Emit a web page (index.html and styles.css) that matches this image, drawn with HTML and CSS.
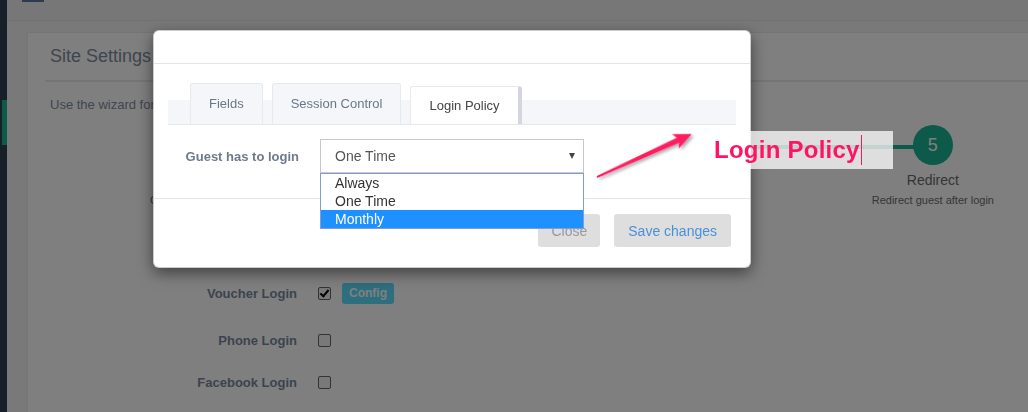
FILE: index.html
```html
<!DOCTYPE html>
<html lang="en">
<head>
<meta charset="utf-8">
<title>Site Settings</title>
<link rel="stylesheet" href="styles.css">
</head>
<body>
<div class="app">
  <aside class="sidebar"><div class="sidebar-accent"></div></aside>
  <div class="main">
    <header class="topbar"><span class="topbar-tab"></span></header>
    <div class="content">
      <section class="panel">
        <div class="panel-heading"><h2>Site Settings</h2></div>
        <div class="panel-body">
          <p class="intro">Use the wizard for setup.</p>
          <ol class="wizard">
            <li class="step step-first"><span class="step-num">1</span><span class="step-title">Fields</span><span class="step-desc">Collect fields</span></li>
            <li class="step"><span class="step-num">2</span><span class="step-title">Session</span><span class="step-desc">Time limits</span></li>
            <li class="step"><span class="step-num">3</span><span class="step-title">Policy</span><span class="step-desc">Login policy</span></li>
            <li class="step"><span class="step-num">4</span><span class="step-title">Pages</span><span class="step-desc">Portal page</span></li>
            <li class="step step-last"><span class="step-num">5</span><span class="step-title">Redirect</span><span class="step-desc">Redirect guest after login</span></li>
          </ol>
          <div class="login-options">
            <div class="opt-row opt-row-wide">
              <span class="opt-label">Voucher Login</span>
              <input class="opt-check" type="checkbox" checked>
              <button class="btn-config" type="button">Config</button>
            </div>
            <div class="opt-row">
              <span class="opt-label">Phone Login</span>
              <input class="opt-check" type="checkbox">
            </div>
            <div class="opt-row">
              <span class="opt-label">Facebook Login</span>
              <input class="opt-check" type="checkbox">
            </div>
          </div>
        </div>
      </section>
    </div>
  </div>
</div>

<div class="backdrop"></div>

<div class="modal">
  <div class="modal-header"></div>
  <div class="modal-body">
    <ul class="nav-tabs">
      <li class="tab">Fields</li>
      <li class="tab">Session Control</li>
      <li class="tab tab-active">Login Policy</li>
    </ul>
    <div class="form-group">
      <label class="form-label">Guest has to login</label>
      <div class="select">
        <span class="select-value">One Time</span>
        <span class="select-caret"></span>
        <ul class="select-list">
          <li class="option">Always</li>
          <li class="option">One Time</li>
          <li class="option option-hover">Monthly</li>
        </ul>
      </div>
    </div>
  </div>
  <div class="modal-footer">
    <button class="btn btn-close" type="button">Close</button>
    <button class="btn btn-save" type="button">Save changes</button>
  </div>
</div>

<div class="annotation"><span class="annotation-text">Login Policy</span></div>

<svg class="arrow" width="1028" height="412" viewBox="0 0 1028 412">
  <defs>
    <filter id="sh" x="-20%" y="-50%" width="140%" height="200%">
      <feDropShadow dx="1.5" dy="2.5" stdDeviation="1.4" flood-color="#000" flood-opacity="0.35"/>
    </filter>
  </defs>
  <g transform="translate(597,177) rotate(-24.4)" filter="url(#sh)">
    <polygon points="0,-0.9 89,-2.8 86,-8 104,0 86,8 89,2.8 0,0.9" fill="#ff1a5e"/>
  </g>
</svg>
</body>
</html>
```
FILE: styles.css
```css
* { box-sizing: border-box; }
html, body { margin: 0; }
body {
  width: 1028px;
  height: 412px;
  overflow: hidden;
  position: relative;
  font-family: "Liberation Sans", Arial, sans-serif;
  font-size: 13px;
  color: #676a6c;
  background: #f3f3f4;
}

/* ---------- underlying page ---------- */
.app { display: flex; height: 412px; }
.sidebar { width: 7px; flex: none; background: #2f4050; padding-top: 100px; }
.sidebar-accent { margin-left: 2px; width: 5px; height: 45px; background: #1ab394; }
.main { flex: 1; min-width: 0; display: flex; flex-direction: column; }
.topbar {
  height: 21px;
  flex: none;
  background: #eeeeef;
  border-bottom: 1px solid #e0e4ea;
  padding-left: 15px;
}
.topbar-tab { display: block; width: 22px; height: 2px; background: #5b76a3; }
.content { flex: 1; padding: 11px 0 0 20px; display: flex; }
.panel {
  flex: 1;
  min-width: 0;
  overflow: hidden;
  background: #fff;
  border-top: 1px solid #e7eaec;
  border-left: 1px solid #e7eaec;
  padding-left: 17px;
}
.panel-heading { padding: 13px 5px 14px; border-bottom: 2px solid #e7eaec; }
.panel-heading h2 { margin: 0; font-size: 18px; line-height: 20px; font-weight: normal; color: #7e8ba0; }
.intro { margin: 14px 0 0 5px; line-height: 18px; color: #7e8ba0; }

.wizard {
  list-style: none;
  padding: 0;
  margin: 11px 34px 0 105px;
  display: flex;
  gap: 60px;
  position: relative;
}
.wizard::before {
  content: "";
  position: absolute;
  top: 20px;
  left: 30px;
  right: 62px;
  height: 4px;
  background: #1ab394;
}
.step { display: flex; flex-direction: column; align-items: center; position: relative; }
.step-first { margin-right: 153px; }
.step-last { margin-left: auto; }
.step-num {
  width: 40px;
  height: 40px;
  border-radius: 50%;
  background: #1ab394;
  color: #fff;
  font-size: 18px;
  line-height: 40px;
  text-align: center;
}
.step-title { margin-top: 6px; font-size: 14px; line-height: 18px; color: #6b6b6b; }
.step-desc { margin-top: 4px; font-size: 11px; line-height: 14px; color: #6b6b6b; white-space: nowrap; }

.login-options { margin-top: 73px; }
.opt-row { display: flex; align-items: center; height: 26px; margin-bottom: 16px; }
.opt-row-wide { margin-bottom: 21px; }
.opt-label { width: 252px; text-align: right; font-weight: bold; color: #78879e; }
.opt-check {
  appearance: none;
  -webkit-appearance: none;
  margin: 0 0 0 21px;
  width: 13px;
  height: 13px;
  border: 1px solid #666;
  border-radius: 2px;
  background: #f2f2f2;
  position: relative;
}
.opt-check:checked::after {
  content: "";
  position: absolute;
  left: 3px;
  top: 0;
  width: 3px;
  height: 7px;
  border-right: 2px solid #000;
  border-bottom: 2px solid #000;
  transform: rotate(40deg);
}
.btn-config {
  margin-left: 11px;
  height: 21px;
  padding: 0 7px;
  border: none;
  border-radius: 3px;
  background: #5adcff;
  color: #fff;
  font-family: inherit;
  font-size: 12px;
  font-weight: bold;
}

/* ---------- modal ---------- */
.backdrop { position: fixed; inset: 0; background: rgba(0, 0, 0, 0.5); z-index: 5; }
.modal {
  position: absolute;
  left: 153px;
  top: 30px;
  width: 598px;
  background: #fff;
  border: 1px solid rgba(0, 0, 0, 0.2);
  border-radius: 6px;
  box-shadow: 0 5px 15px rgba(0, 0, 0, 0.5);
  z-index: 10;
}
.modal-header { height: 33px; border-bottom: 1px solid #e5e5e5; }
.modal-body { padding: 19px 14px 25px; }
.nav-tabs {
  list-style: none;
  margin: 0;
  padding: 0 0 0 22px;
  display: flex;
  align-items: flex-end;
  gap: 9px;
  height: 42px;
  border-bottom: 1px solid #e7eaec;
  background: linear-gradient(to bottom, transparent 17px, #f4f6f9 17px);
}
.tab {
  height: 41px;
  line-height: 40px;
  padding: 0 18px;
  border: 1px solid #e7eaec;
  border-bottom: none;
  border-radius: 3px 3px 0 0;
  background: #f4f6f9;
  color: #6b7789;
}
.tab-active {
  height: 38px;
  line-height: 38px;
  background: #fff;
  color: #444;
  border-right: 4px solid #d3d7dd;
}
.form-group { margin-top: 14px; display: flex; align-items: center; }
.form-label { width: 131px; text-align: right; font-weight: bold; color: #6e7a8c; }
.select {
  position: relative;
  margin-left: 21px;
  width: 264px;
  height: 34px;
  border: 1px solid #c8c8c8;
  display: flex;
  align-items: center;
  padding: 0 8px 0 14px;
  font-size: 14px;
  color: #555;
}
.select-value { flex: 1; }
.select-caret {
  width: 0;
  height: 0;
  border-left: 3.5px solid transparent;
  border-right: 3.5px solid transparent;
  border-top: 6px solid #444;
}
.select-list {
  position: absolute;
  left: -1px;
  top: 33px;
  width: 264px;
  margin: 0;
  padding: 0;
  list-style: none;
  background: #fff;
  border: 1px solid #7f9dd6;
  z-index: 3;
}
.option { height: 18px; line-height: 18px; padding-left: 14px; color: #333; }
.option-hover { background: #1e90ff; color: #fff; }

.modal-footer {
  border-top: 1px solid #e5e5e5;
  padding: 15px 19px 20px;
  display: flex;
  justify-content: flex-end;
  gap: 14px;
}
.btn {
  height: 33px;
  padding: 0 13px;
  border: none;
  border-radius: 3px;
  background: #dedede;
  font-family: inherit;
  font-size: 14px;
}
.btn-close { color: #999; }
.btn-save { color: #4a90d9; padding: 0 14px; }

/* ---------- annotation ---------- */
.annotation {
  position: absolute;
  left: 700px;
  top: 131px;
  width: 193px;
  height: 38px;
  display: flex;
  align-items: center;
  padding-left: 14px;
  background: rgba(255, 255, 255, 0.74);
  z-index: 20;
}
.annotation-text {
  display: inline-block;
  line-height: 30px;
  padding-right: 1px;
  border-right: 1px solid #ff1464;
  font-size: 24px;
  font-weight: bold;
  letter-spacing: 0.25px;
  color: #ff1464;
}
.arrow { position: absolute; left: 0; top: 0; z-index: 20; pointer-events: none; }
```
